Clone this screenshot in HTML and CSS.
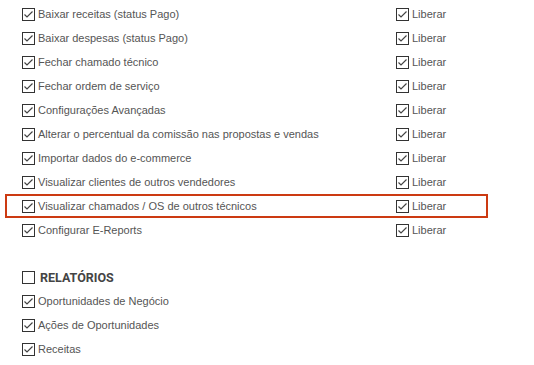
FILE: index.html
```html
<!DOCTYPE html>
<html lang="pt-BR">

<head>
    <meta charset="UTF-8">
    <title>Permissões</title>
    <link rel="stylesheet" href="styles.css">
</head>

<body>
    <section class="perms">
        <div class="perm-row">
            <label class="perm-name"><span class="chk on"></span>Baixar receitas (status Pago)</label>
            <label class="perm-free"><span class="chk on"></span>Liberar</label>
        </div>
        <div class="perm-row">
            <label class="perm-name"><span class="chk on"></span>Baixar despesas (status Pago)</label>
            <label class="perm-free"><span class="chk on"></span>Liberar</label>
        </div>
        <div class="perm-row">
            <label class="perm-name"><span class="chk on"></span>Fechar chamado técnico</label>
            <label class="perm-free"><span class="chk on"></span>Liberar</label>
        </div>
        <div class="perm-row">
            <label class="perm-name"><span class="chk on"></span>Fechar ordem de serviço</label>
            <label class="perm-free"><span class="chk on"></span>Liberar</label>
        </div>
        <div class="perm-row">
            <label class="perm-name"><span class="chk on"></span>Configurações Avançadas</label>
            <label class="perm-free"><span class="chk on"></span>Liberar</label>
        </div>
        <div class="perm-row">
            <label class="perm-name"><span class="chk on"></span>Alterar o percentual da comissão nas propostas e vendas</label>
            <label class="perm-free"><span class="chk on"></span>Liberar</label>
        </div>
        <div class="perm-row">
            <label class="perm-name"><span class="chk on"></span>Importar dados do e-commerce</label>
            <label class="perm-free"><span class="chk on"></span>Liberar</label>
        </div>
        <div class="perm-row">
            <label class="perm-name"><span class="chk on"></span>Visualizar clientes de outros vendedores</label>
            <label class="perm-free"><span class="chk on"></span>Liberar</label>
        </div>
        <div class="perm-row highlight">
            <label class="perm-name"><span class="chk on"></span>Visualizar chamados / OS de outros técnicos</label>
            <label class="perm-free"><span class="chk on"></span>Liberar</label>
        </div>
        <div class="perm-row">
            <label class="perm-name"><span class="chk on"></span>Configurar E-Reports</label>
            <label class="perm-free"><span class="chk on"></span>Liberar</label>
        </div>
    </section>

    <section class="perms group">
        <div class="perm-row">
            <label class="perm-title"><span class="chk"></span>RELATÓRIOS</label>
        </div>
        <div class="perm-row">
            <label class="perm-name"><span class="chk on"></span>Oportunidades de Negócio</label>
        </div>
        <div class="perm-row">
            <label class="perm-name"><span class="chk on"></span>Ações de Oportunidades</label>
        </div>
        <div class="perm-row">
            <label class="perm-name"><span class="chk on"></span>Receitas</label>
        </div>
    </section>
</body>

</html>
```

FILE: styles.css
```css
body {
    font-family: "Liberation Sans", Arial, sans-serif;
    font-size: 11px;
    color: #555;
    background: #fff;
    margin: 0;
    padding: 2px 0 0 0;
}

.perms {
    display: flex;
    flex-direction: column;
}

.perms.group {
    margin-top: 23px;
}

.perm-row {
    display: flex;
    align-items: center;
    box-sizing: border-box;
    width: 483px;
    height: 24px;
    margin-left: 5px;
    padding-left: 15px;
    border: 2px solid transparent;
}

.perm-row.highlight {
    border-color: #cc3a12;
}

.perm-name,
.perm-free,
.perm-title {
    display: flex;
    align-items: center;
}

.perm-name {
    width: 374px;
}

.perm-title {
    font-family: Roboto, "Liberation Sans", sans-serif;
    font-size: 12.5px;
    font-weight: bold;
    color: #444;
}

.perm-title .chk {
    margin-right: 5px;
}

.chk {
    display: inline-block;
    box-sizing: border-box;
    width: 13px;
    height: 13px;
    border: 1px solid #333;
    background: #fff;
    margin-right: 3px;
    flex-shrink: 0;
}

.chk.on {
    background: #fff url("data:image/svg+xml;utf8,<svg xmlns='http://www.w3.org/2000/svg' width='11' height='11'><polyline points='1.5,5.5 4,8 9.5,2.5' fill='none' stroke='%23444' stroke-width='1.2'/></svg>") no-repeat center;
}
```
